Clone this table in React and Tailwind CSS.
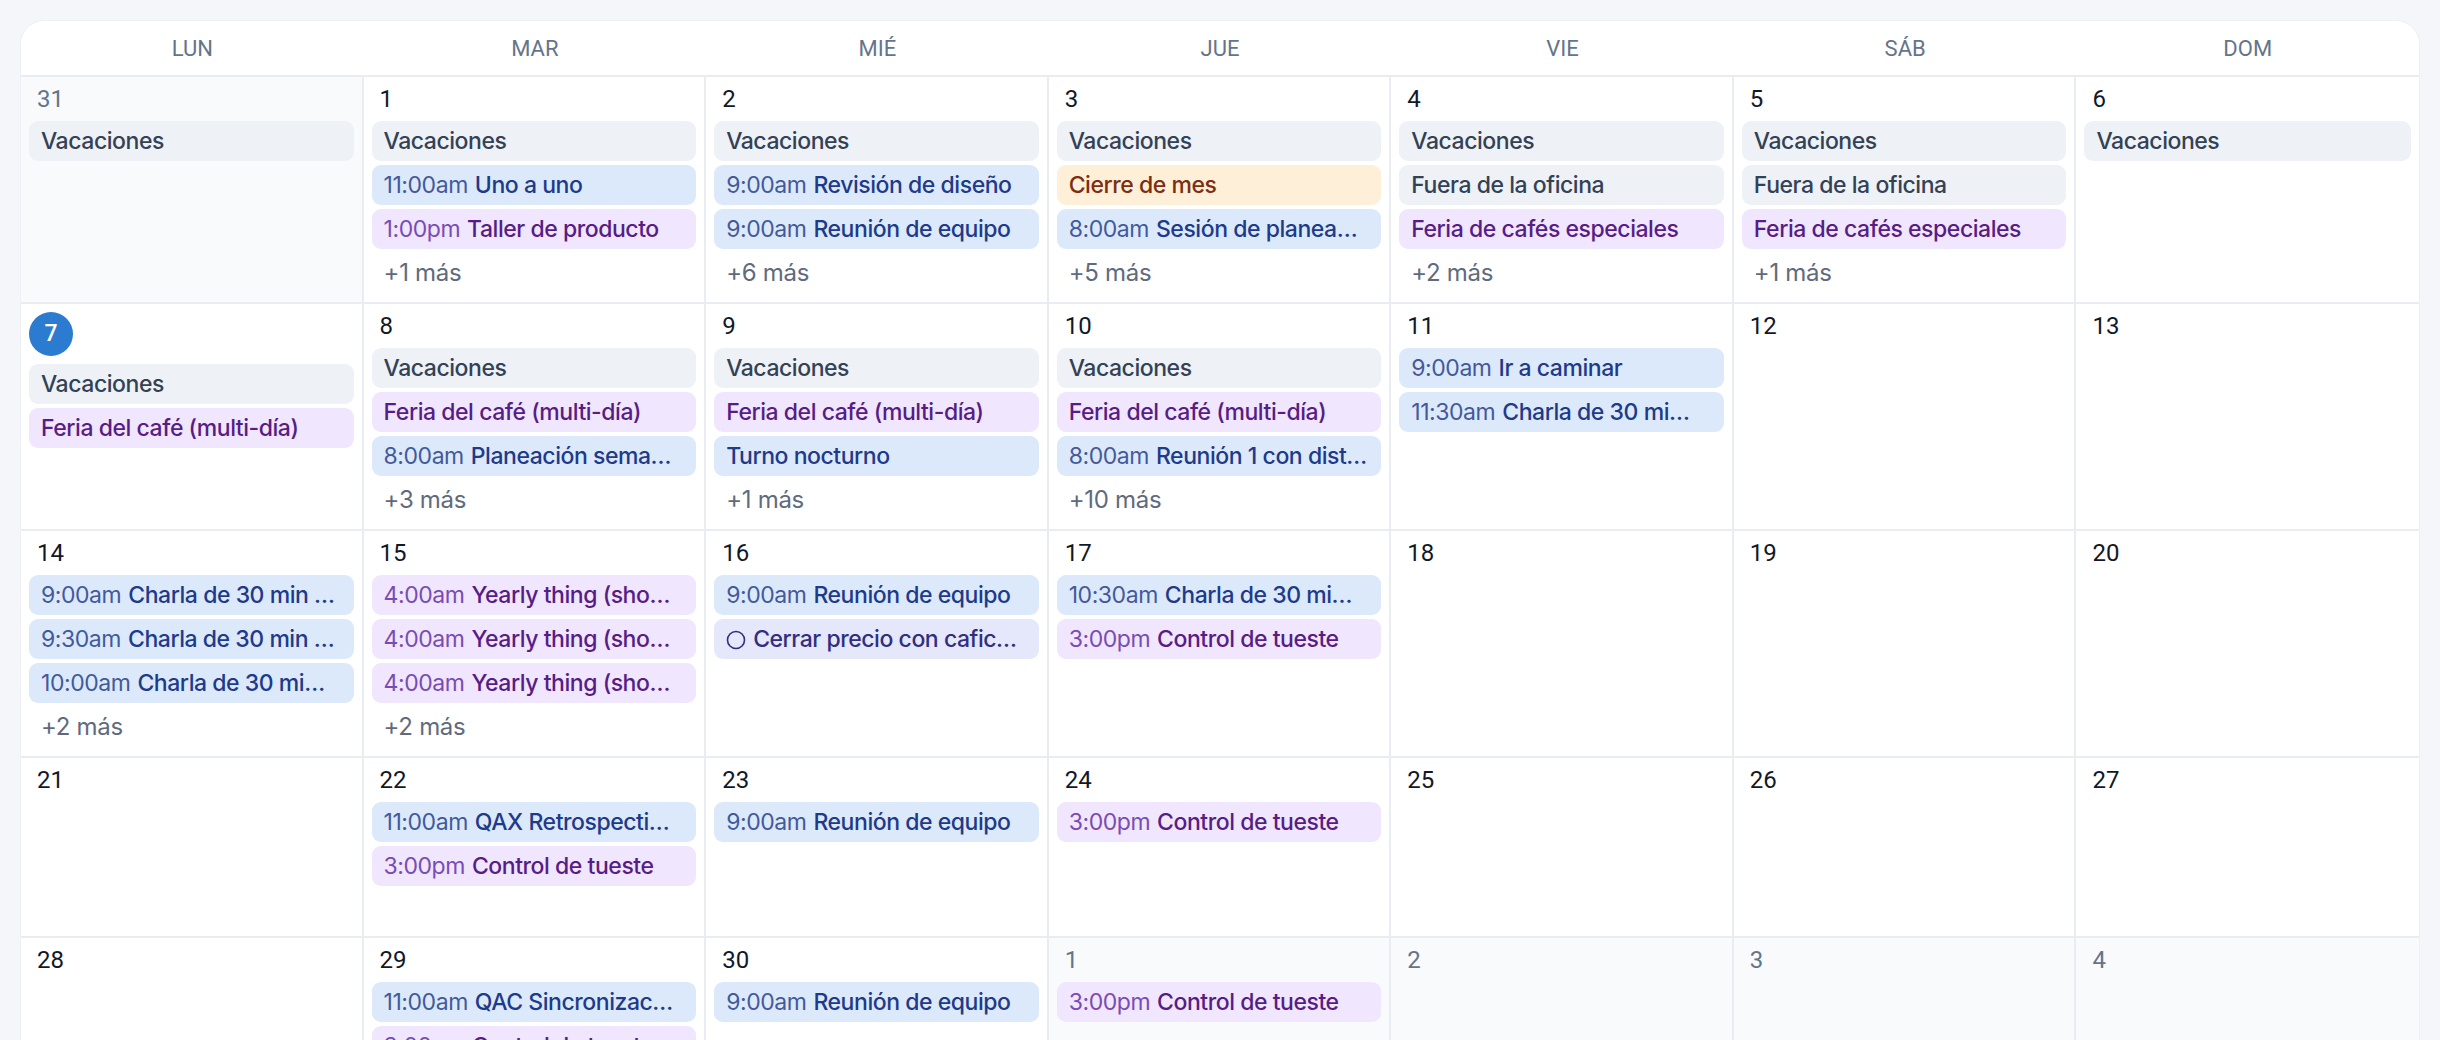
import React from 'react';

const DAYS = ['LUN', 'MAR', 'MIÉ', 'JUE', 'VIE', 'SÁB', 'DOM'];

const STYLES = {
  gray: { box: 'bg-[#eef1f5]', title: 'text-[#334155]', time: 'text-[#475569]' },
  blue: { box: 'bg-[#dce9fb]', title: 'text-[#1e3a8a]', time: 'text-[#43599c]' },
  purple: { box: 'bg-[#f0e6fd]', title: 'text-[#581c87]', time: 'text-[#7a4bb5]' },
  orange: { box: 'bg-[#feefd8]', title: 'text-[#7c2d12]', time: 'text-[#9a3412]' },
  indigo: { box: 'bg-[#e5e7fb]', title: 'text-[#312e81]', time: 'text-[#4338ca]' },
};

const vac = { c: 'gray', title: 'Vacaciones' };
const feria = { c: 'purple', title: 'Feria del café (multi-día)' };
const tueste = { c: 'purple', time: '3:00pm', title: 'Control de tueste' };
const reunion = { c: 'blue', time: '9:00am', title: 'Reunión de equipo' };

const weeks = [
  [
    { d: 31, out: true, ev: [vac] },
    { d: 1, ev: [vac, { c: 'blue', time: '11:00am', title: 'Uno a uno' }, { c: 'purple', time: '1:00pm', title: 'Taller de producto' }], more: 1 },
    { d: 2, ev: [vac, { c: 'blue', time: '9:00am', title: 'Revisión de diseño' }, reunion], more: 6 },
    { d: 3, ev: [vac, { c: 'orange', title: 'Cierre de mes' }, { c: 'blue', time: '8:00am', title: 'Sesión de planea…' }], more: 5 },
    { d: 4, ev: [vac, { c: 'gray', title: 'Fuera de la oficina' }, { c: 'purple', title: 'Feria de cafés especiales' }], more: 2 },
    { d: 5, ev: [vac, { c: 'gray', title: 'Fuera de la oficina' }, { c: 'purple', title: 'Feria de cafés especiales' }], more: 1 },
    { d: 6, ev: [vac] },
  ],
  [
    { d: 7, today: true, ev: [vac, feria] },
    { d: 8, ev: [vac, feria, { c: 'blue', time: '8:00am', title: 'Planeación sema…' }], more: 3 },
    { d: 9, ev: [vac, feria, { c: 'blue', title: 'Turno nocturno' }], more: 1 },
    { d: 10, ev: [vac, feria, { c: 'blue', time: '8:00am', title: 'Reunión 1 con dist…' }], more: 10 },
    { d: 11, ev: [{ c: 'blue', time: '9:00am', title: 'Ir a caminar' }, { c: 'blue', time: '11:30am', title: 'Charla de 30 mi…' }] },
    { d: 12, ev: [] },
    { d: 13, ev: [] },
  ],
  [
    { d: 14, ev: [{ c: 'blue', time: '9:00am', title: 'Charla de 30 min …' }, { c: 'blue', time: '9:30am', title: 'Charla de 30 min …' }, { c: 'blue', time: '10:00am', title: 'Charla de 30 mi…' }], more: 2 },
    { d: 15, ev: [{ c: 'purple', time: '4:00am', title: 'Yearly thing (sho…' }, { c: 'purple', time: '4:00am', title: 'Yearly thing (sho…' }, { c: 'purple', time: '4:00am', title: 'Yearly thing (sho…' }], more: 2 },
    { d: 16, ev: [reunion, { c: 'indigo', task: true, title: 'Cerrar precio con cafic…' }] },
    { d: 17, ev: [{ c: 'blue', time: '10:30am', title: 'Charla de 30 mi…' }, tueste] },
    { d: 18, ev: [] },
    { d: 19, ev: [] },
    { d: 20, ev: [] },
  ],
  [
    { d: 21, ev: [] },
    { d: 22, ev: [{ c: 'blue', time: '11:00am', title: 'QAX Retrospecti…' }, tueste] },
    { d: 23, ev: [reunion] },
    { d: 24, ev: [tueste] },
    { d: 25, ev: [] },
    { d: 26, ev: [] },
    { d: 27, ev: [] },
  ],
  [
    { d: 28, ev: [] },
    { d: 29, ev: [{ c: 'blue', time: '11:00am', title: 'QAC Sincronizac…' }, tueste] },
    { d: 30, ev: [reunion] },
    { d: 1, out: true, ev: [tueste] },
    { d: 2, out: true, ev: [] },
    { d: 3, out: true, ev: [] },
    { d: 4, out: true, ev: [] },
  ],
];

function EventPill({ e }) {
  const s = STYLES[e.c];
  return (
    <div className={`h-10 rounded-[9px] px-3 leading-10 truncate text-[23px] tracking-[-0.45px] ${s.box}`}>
      {e.task && (
        <svg width="20" height="20" viewBox="0 0 20 20" className={`inline-block mr-[7px] align-[-3px] ${s.title}`}>
          <circle cx="10" cy="10" r="8.5" fill="none" stroke="currentColor" strokeWidth="1.6" />
        </svg>
      )}
      {e.time && <span className={`font-normal mr-[7px] ${s.time}`}>{e.time}</span>}
      <span className={`font-medium ${s.title}`}>{e.title}</span>
    </div>
  );
}

function DayCell({ day, last }) {
  return (
    <div
      className={`min-w-0 min-h-[180px] border-b-2 border-[#e9edf2] px-2 pt-2 pb-[9px] flex flex-col ${
        last ? '' : 'border-r-2'
      } ${day.out ? 'bg-[#f8fafc]' : 'bg-white'}`}
    >
      {day.today ? (
        <div className="w-11 h-11 rounded-full bg-[#2b7bd1] text-white flex items-center justify-center text-[23px] font-['Roboto',sans-serif] font-medium">
          {day.d}
        </div>
      ) : (
        <div
          className={`h-7 leading-7 pl-2 text-[24px] font-['Roboto',sans-serif] ${
            day.out ? 'text-[#64748b]' : 'text-[#111827]'
          }`}
        >
          {day.d}
        </div>
      )}
      {day.ev.length > 0 && (
        <div className="mt-2 flex flex-col gap-1">
          {day.ev.map((e, i) => (
            <EventPill key={i} e={e} />
          ))}
          {day.more && (
            <div className="h-10 leading-10 px-3 text-[24px] tracking-[-0.3px] text-[#5f6b7d]">+{day.more} más</div>
          )}
        </div>
      )}
    </div>
  );
}

export default function App() {
  return (
    <div className="min-h-screen bg-[#f4f6f9] px-5 pt-5 pb-5 font-['Inter',sans-serif]">
      <div className="bg-white rounded-[24px] overflow-hidden border border-[#edf0f4]">
        <div className="grid grid-cols-7 h-[56px] border-b-2 border-[#e9edf2]">
          {DAYS.map((d) => (
            <div key={d} className="flex items-center justify-center text-[22px] text-[#64748b] font-['Roboto',sans-serif]">
              {d}
            </div>
          ))}
        </div>
        {weeks.map((week, wi) => (
          <div key={wi} className="grid grid-cols-7">
            {week.map((day, di) => (
              <DayCell key={di} day={day} last={di === 6} />
            ))}
          </div>
        ))}
      </div>
    </div>
  );
}
